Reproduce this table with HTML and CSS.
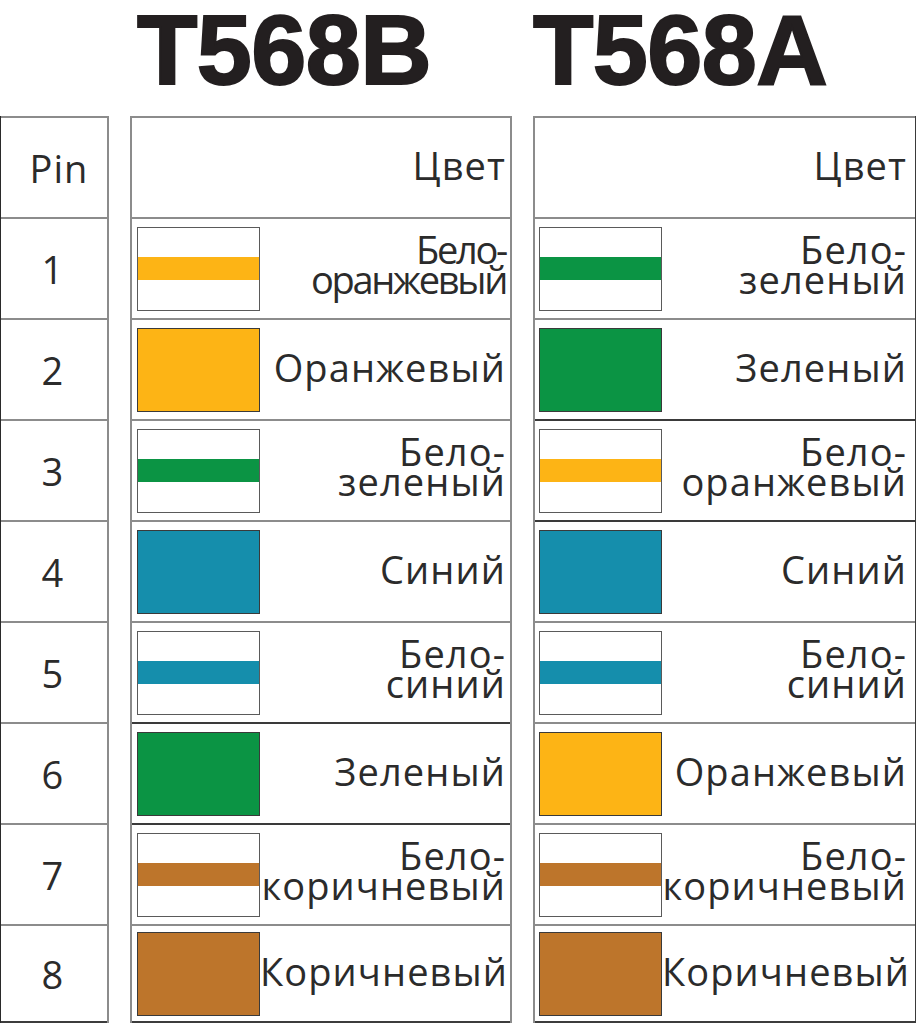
FILE: index.html
```html
<!DOCTYPE html>
<html lang="ru">
<head>
<meta charset="utf-8">
<title>T568B / T568A</title>
<link rel="stylesheet" href="styles.css">
</head>
<body>
<div class="sheet">
  <div class="titles">
    <div class="spacer"></div>
    <h1 class="title title-b">T568B</h1>
    <h1 class="title title-a">T568A</h1>
  </div>
  <div class="tables">
    <div class="col col-pin">
      <div class="row head"><span class="pin pin-head">Pin</span></div>
      <div class="row"><span class="pin">1</span></div>
      <div class="row"><span class="pin">2</span></div>
      <div class="row"><span class="pin">3</span></div>
      <div class="row"><span class="pin">4</span></div>
      <div class="row"><span class="pin">5</span></div>
      <div class="row"><span class="pin">6</span></div>
      <div class="row"><span class="pin">7</span></div>
      <div class="row"><span class="pin">8</span></div>
    </div>

    <div class="col col-wire">
      <div class="row head"><span class="label">Цвет</span></div>
      <div class="row"><span class="sw striped orange"></span><span class="label two tight">Бело-<br>оранжевый</span></div>
      <div class="row"><span class="sw solid orange"></span><span class="label">Оранжевый</span></div>
      <div class="row"><span class="sw striped green"></span><span class="label two">Бело-<br>зеленый</span></div>
      <div class="row"><span class="sw solid blue"></span><span class="label">Синий</span></div>
      <div class="row"><span class="sw striped blue"></span><span class="label two">Бело-<br>синий</span></div>
      <div class="row dark"><span class="sw solid green"></span><span class="label">Зеленый</span></div>
      <div class="row dark"><span class="sw striped brown"></span><span class="label two">Бело-<br>коричневый</span></div>
      <div class="row"><span class="sw solid brown"></span><span class="label">Коричневый</span></div>
    </div>

    <div class="col col-wire col-a">
      <div class="row head"><span class="label">Цвет</span></div>
      <div class="row"><span class="sw striped green"></span><span class="label two">Бело-<br>зеленый</span></div>
      <div class="row"><span class="sw solid green"></span><span class="label">Зеленый</span></div>
      <div class="row dark"><span class="sw striped orange"></span><span class="label two">Бело-<br>оранжевый</span></div>
      <div class="row dark"><span class="sw solid blue"></span><span class="label">Синий</span></div>
      <div class="row"><span class="sw striped blue"></span><span class="label two">Бело-<br>синий</span></div>
      <div class="row"><span class="sw solid orange"></span><span class="label">Оранжевый</span></div>
      <div class="row"><span class="sw striped brown"></span><span class="label two">Бело-<br>коричневый</span></div>
      <div class="row"><span class="sw solid brown"></span><span class="label">Коричневый</span></div>
    </div>
  </div>
</div>
</body>
</html>
```
FILE: styles.css
```css
* { box-sizing: border-box; }

html, body {
  margin: 0;
  padding: 0;
  background: #ffffff;
}

.sheet {
  width: 916px;
  height: 1024px;
  overflow: hidden;
  background: #ffffff;
}

.titles,
.tables {
  display: grid;
  grid-template-columns: 109px 382px 383px;
  column-gap: 21px;
}

.titles {
  height: 116px;
}

.title {
  margin: 0;
  font-family: "Liberation Sans", Arial, sans-serif;
  font-weight: 700;
  font-size: 99px;
  line-height: 99px;
  color: #231f20;
  -webkit-text-stroke: 2px #231f20;
  letter-spacing: -0.6px;
  white-space: nowrap;
}

.title-b { padding-left: 7px; }
.title-a { padding-left: 0; }

.col {
  display: flex;
  flex-direction: column;
  border-left: 2px solid #8c8c8c;
  border-right: 2px solid #8c8c8c;
}

.col-pin {
  border-left: 1px solid #2a2a2a;
}

.col-a {
  border-right: 1px solid #3a3a3a;
}

.row {
  height: 101px;
  flex: none;
  border-top: 2px solid #8c8c8c;
  display: flex;
  align-items: center;
}

.row:last-child {
  height: 99px;
  border-bottom: 2px solid #3c3c3c;
}

.row.dark {
  border-top-color: #3a3a3a;
}

.col-pin .row {
  justify-content: center;
}

.pin,
.label {
  font-family: "Open Sans", "DejaVu Sans", sans-serif;
  font-size: 38px;
  color: #2b2b2b;
  font-weight: 400;
  letter-spacing: 1.1px;
}

.pin {
  padding-right: 2px;
}

.pin-head {
  padding-left: 10px;
  padding-right: 0;
}

.col-wire .row {
  padding: 0 5px 0 5px;
  justify-content: space-between;
}

.col-a .row {
  padding-left: 4px;
  padding-right: 9px;
}

.col-wire .row.head {
  justify-content: flex-end;
}

.label {
  text-align: right;
  white-space: nowrap;
  padding-bottom: 5px;
  margin-right: -1px;
}

.label.two {
  line-height: 30px;
  padding-bottom: 10px;
}

.label.tight {
  letter-spacing: -2.3px;
}

.sw {
  width: 123px;
  height: 84px;
  flex: none;
  border: 1px solid #3a3a3a;
}

.solid.orange { background: #fdb415; }
.solid.green  { background: #0b9444; }
.solid.blue   { background: #158eac; }
.solid.brown  { background: #bd752b; }

.striped {
  border-color: #5a5a5a;
  background: #ffffff;
}

.striped.orange { background: linear-gradient(to bottom, #fff 0 29px, #fdb415 29px 52px, #fff 52px); }
.striped.green  { background: linear-gradient(to bottom, #fff 0 29px, #0b9444 29px 52px, #fff 52px); }
.striped.blue   { background: linear-gradient(to bottom, #fff 0 29px, #158eac 29px 52px, #fff 52px); }
.striped.brown  { background: linear-gradient(to bottom, #fff 0 29px, #bd752b 29px 52px, #fff 52px); }
```
